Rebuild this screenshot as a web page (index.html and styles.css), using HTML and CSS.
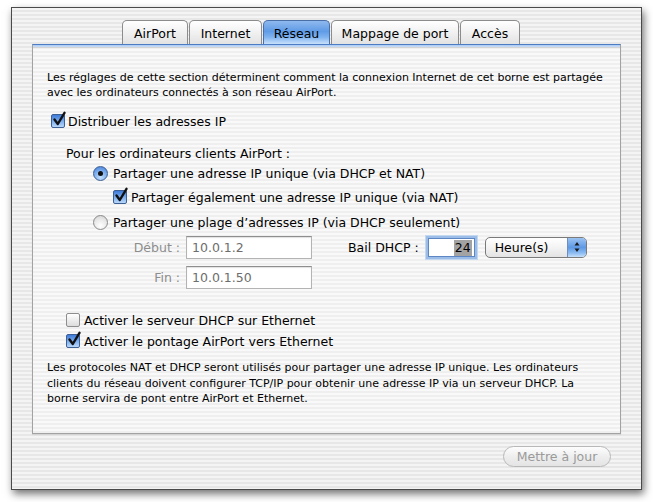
FILE: index.html
```html
<!DOCTYPE html>
<html lang="fr">
<head>
<meta charset="utf-8">
<title>Réseau</title>
<link rel="stylesheet" href="styles.css">
</head>
<body>
<div class="window">
  <div class="tabs">
    <div class="tab t-airport">AirPort</div>
    <div class="tab t-internet">Internet</div>
    <div class="tab t-reseau active">Réseau</div>
    <div class="tab t-mappage">Mappage de port</div>
    <div class="tab t-acces">Accès</div>
  </div>
  <div class="panel">
    <div class="band"></div>
    <div class="content">
      <p class="small intro">Les réglages de cette section déterminent comment la connexion Internet de cet borne est partagée<br>avec les ordinateurs connectés à son réseau AirPort.</p>

      <div class="row r-distrib">
        <span class="cb on"><svg viewBox="0 0 16 16"><path d="M3.5 7.5 L6.8 12 L13.5 0.8" /></svg></span>
        <span class="lbl">Distribuer les adresses IP</span>
      </div>

      <div class="row r-pour">
        <span class="lbl">Pour les ordinateurs clients AirPort :</span>
      </div>

      <div class="row r-radio1">
        <span class="radio on"><span class="dot"></span></span>
        <span class="lbl">Partager une adresse IP unique (via DHCP et NAT)</span>
      </div>

      <div class="row r-check2">
        <span class="cb on"><svg viewBox="0 0 16 16"><path d="M3.5 7.5 L6.8 12 L13.5 0.8" /></svg></span>
        <span class="lbl">Partager également une adresse IP unique (via NAT)</span>
      </div>

      <div class="row r-radio2">
        <span class="radio"></span>
        <span class="lbl">Partager une plage d’adresses IP (via DHCP seulement)</span>
      </div>

      <div class="field-row r-debut">
        <span class="flabel">Début :</span>
        <span class="input">10.0.1.2</span>
        <span class="blabel">Bail DHCP :</span>
        <span class="input focus"><span class="sel">24</span></span>
        <span class="popup"><span class="ptext">Heure(s)</span><span class="arrows"><svg viewBox="0 0 10 14"><path d="M5 2 L7.5 5.5 L2.5 5.5 Z M5 12 L7.5 8.5 L2.5 8.5 Z"/></svg></span></span>
      </div>

      <div class="field-row r-fin">
        <span class="flabel">Fin :</span>
        <span class="input">10.0.1.50</span>
      </div>

      <div class="row r-serveur">
        <span class="cb"></span>
        <span class="lbl">Activer le serveur DHCP sur Ethernet</span>
      </div>

      <div class="row r-pontage">
        <span class="cb on"><svg viewBox="0 0 16 16"><path d="M3.5 7.5 L6.8 12 L13.5 0.8" /></svg></span>
        <span class="lbl">Activer le pontage AirPort vers Ethernet</span>
      </div>

      <p class="small outro">Les protocoles NAT et DHCP seront utilisés pour partager une adresse IP unique. Les ordinateurs<br>clients du réseau doivent configurer TCP/IP pour obtenir une adresse IP via un serveur DHCP. La<br>borne servira de pont entre AirPort et Ethernet.</p>
    </div>
  </div>
  <div class="buttons">
    <span class="button">Mettre à jour</span>
  </div>
</div>
</body>
</html>
```

FILE: styles.css
```css
* { box-sizing: border-box; }

html, body {
  margin: 0;
  padding: 0;
  background: #ffffff;
}

body {
  font-family: "DejaVu Sans", "Liberation Sans", sans-serif;
  font-size: 12.5px;
  color: #000;
  width: 653px;
  height: 502px;
  overflow: hidden;
}

.window {
  margin: 7px 0 0 11px;
  width: 631px;
  height: 483px;
  border: 1px solid #4a4a4a;
  box-shadow: 2px 4px 8px rgba(0, 0, 0, 0.55);
  background: repeating-linear-gradient(to bottom, #f4f4f4 0, #f4f4f4 2px, #e7e7e7 2px, #e7e7e7 4px);
  padding: 12px 20px 0 20px;
}

/* Tabs */
.tabs {
  display: flex;
  justify-content: flex-start;
  padding-left: 90px;
  height: 24px;
}

.tab {
  height: 24px;
  border: 1px solid #8c8c8c;
  border-bottom: none;
  border-radius: 5px 5px 0 0;
  background: linear-gradient(to bottom, #ffffff 0%, #f1f1f1 50%, #e2e2e2 100%);
  display: flex;
  align-items: center;
  justify-content: center;
  font-size: 12.5px;
  padding-top: 1px;
  margin-right: 1px;
  white-space: nowrap;
}

.t-airport { width: 66px; }
.t-internet { width: 73px; }
.t-reseau { width: 67px; }
.t-mappage { width: 128px; }
.t-acces { width: 60px; }

.tab.active {
  border-color: #4a6fa8;
  background: linear-gradient(to bottom, #8fb9ee 0%, #5f9be6 45%, #7fb3f0 70%, #c8e0fa 100%);
}

/* Panel */
.panel {
  height: 390px;
  border: 1px solid #a2a2a2;
  border-top: 1px solid #4c7dc4;
  background: repeating-linear-gradient(to bottom, #f9f9f9 0, #f9f9f9 2px, #efefef 2px, #efefef 4px);
  box-shadow: 0 1px 1px rgba(0, 0, 0, 0.08);
}

.band {
  height: 3px;
  background: linear-gradient(to bottom, #a9cbf3, #c9ddf6);
  border-bottom: 1px solid #d4d4d4;
}

.content {
  padding: 22px 14px 0 14px;
}

.small {
  font-size: 11px;
  line-height: 15.5px;
  margin: 0;
}

.intro { line-height: 15px; }

.row {
  display: flex;
  align-items: center;
  height: 18px;
}

.lbl { white-space: nowrap; }

.r-distrib { margin-top: 12px; padding-left: 4px; }
.r-distrib .cb { margin-right: 3px; }
.r-pour { margin-top: 14px; padding-left: 19px; }
.r-radio1 { margin-top: 2px; padding-left: 46px; }
.r-check2 { margin-top: 6px; padding-left: 66px; }
.r-radio2 { margin-top: 7px; padding-left: 46px; }
.r-serveur { margin-top: 22px; padding-left: 19px; }
.r-pontage { margin-top: 3px; padding-left: 19px; }
.outro { margin-top: 10px; }

/* Checkbox */
.cb {
  width: 14px;
  height: 14px;
  border: 1px solid #8e8e8e;
  border-radius: 2px;
  background: linear-gradient(to bottom, #ffffff, #dcdcdc);
  margin-right: 4px;
  position: relative;
  flex: none;
}

.cb.on {
  border-color: #3c5f94;
  background: linear-gradient(to bottom, #3d7ad8 0%, #7fb0ef 55%, #b9d8fa 100%);
}

.cb svg {
  position: absolute;
  left: -1px;
  top: -3px;
  width: 16px;
  height: 16px;
  overflow: visible;
}

.cb svg path {
  fill: none;
  stroke: #111;
  stroke-width: 2.4;
  stroke-linecap: round;
  stroke-linejoin: round;
}

/* Radio */
.radio {
  width: 15px;
  height: 15px;
  border-radius: 50%;
  border: 1px solid #8a8a8a;
  background: radial-gradient(circle at 50% 75%, #ffffff 0%, #e6e6e6 60%, #cfcfcf 100%);
  margin-right: 5px;
  display: flex;
  align-items: center;
  justify-content: center;
  flex: none;
}

.radio.on {
  border-color: #3c5f94;
  background: radial-gradient(circle at 50% 80%, #c4e0fb 0%, #79acef 55%, #3f79d2 100%);
}

.dot {
  width: 5px;
  height: 5px;
  border-radius: 50%;
  background: #111;
}

/* Fields */
.field-row {
  display: flex;
  align-items: center;
  height: 23px;
}

.r-debut { margin-top: 5px; }
.r-fin { margin-top: 7px; }

.flabel {
  width: 133px;
  text-align: right;
  color: #8d8d8d;
  margin-right: 6px;
  white-space: nowrap;
}

.input {
  width: 126px;
  height: 23px;
  border: 1px solid #b3b3b3;
  border-top-color: #8e8e8e;
  background: #ffffff;
  box-shadow: inset 0 1px 1px rgba(0, 0, 0, 0.12);
  display: flex;
  align-items: center;
  padding-left: 5px;
  color: #6d6d6d;
  font-size: 12.5px;
}

.blabel {
  margin-left: 36px;
  margin-right: 9px;
  white-space: nowrap;
}

.input.focus {
  width: 47px;
  height: 19px;
  justify-content: flex-end;
  padding: 0 2px 0 0;
  border: 1px solid #5d86c4;
  box-shadow: 0 0 0 2px #9cbde8, 0 0 0 3px #c3d7f1;
  color: #000;
}

.sel {
  background: #a3a3a3;
  padding: 0 1px;
  line-height: 16px;
}

.popup {
  margin-left: 10px;
  width: 102px;
  height: 21px;
  border: 1px solid #7a7a7a;
  border-radius: 5px;
  background: linear-gradient(to bottom, #ffffff 0%, #f3f3f3 50%, #e3e3e3 100%);
  display: flex;
  align-items: center;
  overflow: hidden;
  margin-top: -1px;
}

.ptext {
  flex: 1;
  padding-left: 9px;
}

.arrows {
  width: 19px;
  height: 100%;
  background: linear-gradient(to bottom, #9cc3f2 0%, #5e99e4 50%, #8fbdf2 80%, #c7e0fa 100%);
  border-left: 1px solid #6d8fbf;
  display: flex;
  align-items: center;
  justify-content: center;
}

.arrows svg {
  width: 10px;
  height: 14px;
}

.arrows svg path { fill: #1a1a1a; }

/* Bottom button */
.buttons {
  display: flex;
  justify-content: flex-end;
  padding-right: 10px;
  margin-top: 12px;
}

.button {
  width: 108px;
  height: 21px;
  border: 1px solid #b8b8b8;
  border-radius: 11px;
  background: linear-gradient(to bottom, #fdfdfd 0%, #eeeeee 50%, #e4e4e4 100%);
  color: #9a9a9a;
  display: flex;
  align-items: center;
  justify-content: center;
  font-size: 12.5px;
}
```
